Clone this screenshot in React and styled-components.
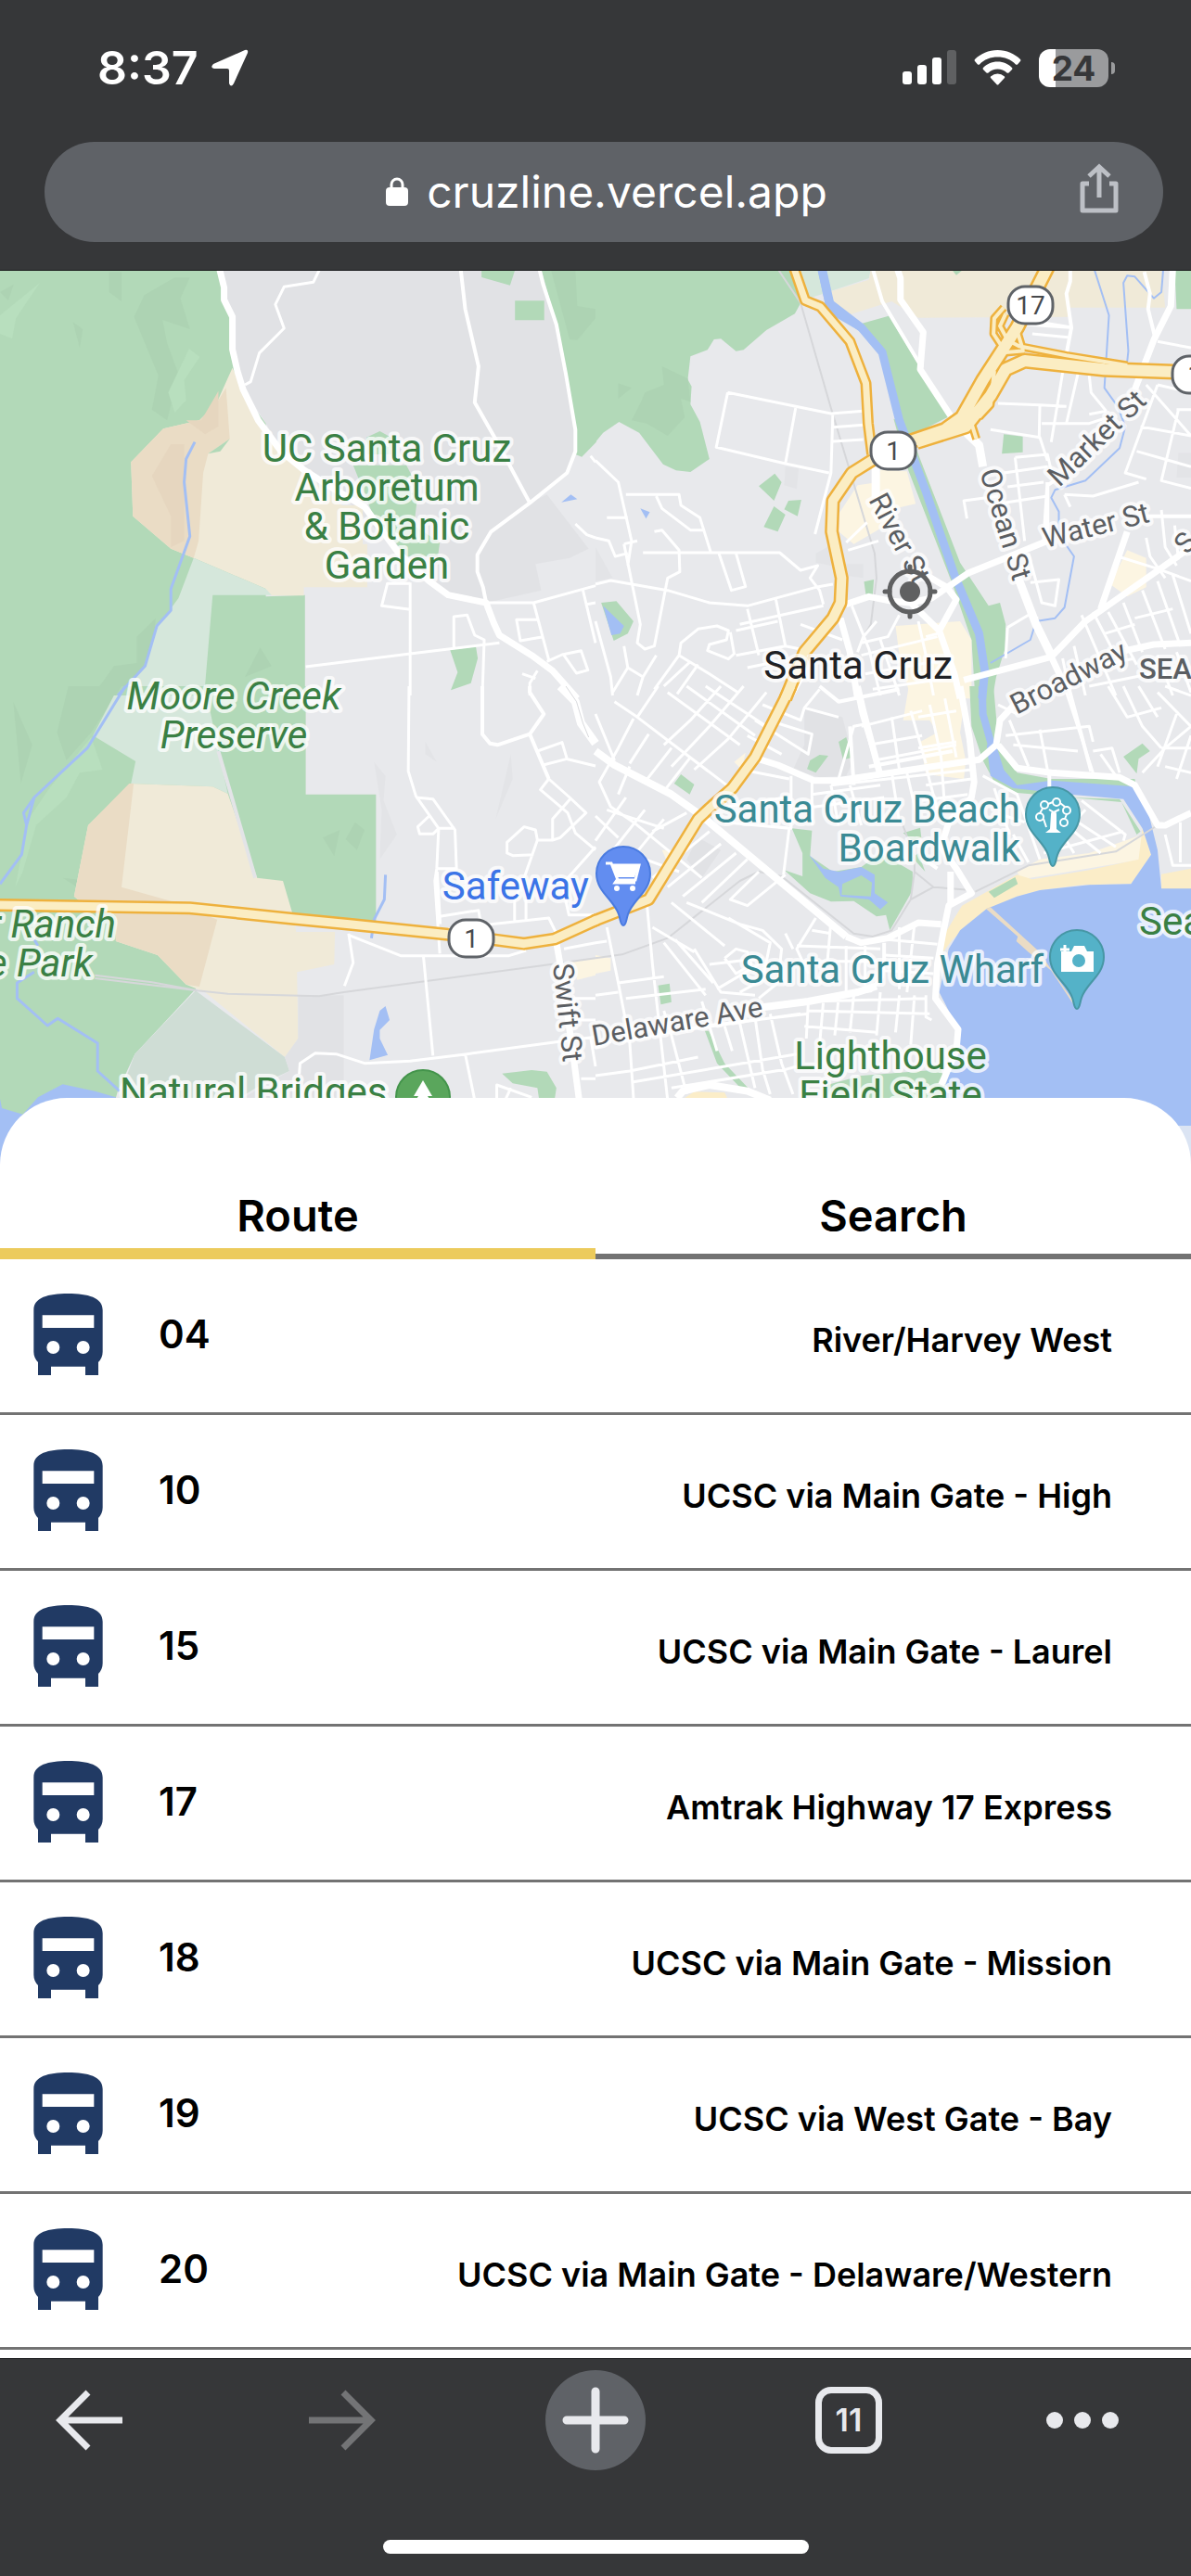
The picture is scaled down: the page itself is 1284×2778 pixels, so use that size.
import React, { useState } from "react"
import styled, { createGlobalStyle } from "styled-components"

const GlobalStyle = createGlobalStyle`
  * {
    box-sizing: border-box;
  }

  body {
    margin: 0;
    background: #363739;
    font-family: Inter, "Liberation Sans", sans-serif;
  }

  button {
    margin: 0;
    padding: 0;
    border: none;
    background: none;
    color: inherit;
    font: inherit;
    cursor: pointer;
  }

  svg {
    display: block;
  }
`

const Page = styled.div`
  display: flex;
  flex-direction: column;
  min-height: 100vh;
`

const Header = styled.header`
  padding: 48px 30px 30px 48px;
  background: #363739;
  border-bottom: 1px solid #17181a;
  color: #fff;
`

const StatusBar = styled.div`
  display: flex;
  justify-content: space-between;
  align-items: center;
  height: 50px;
  padding: 0 52px 0 57px;
`

const StatusGroup = styled.div`
  display: flex;
  align-items: center;
  gap: ${({ $gap }) => $gap}px;
`

const Clock = styled.span`
  font-size: 50px;
  line-height: 50px;
  font-weight: 600;
`

const Battery = styled.div`
  display: flex;
  align-items: center;
  gap: 3px;
`

const BatteryBody = styled.div`
  width: 75px;
  height: 41px;
  border-radius: 12px;
  background: linear-gradient(to right, #fff 18px, #9a9b9d 18px);
  color: #363739;
  font-size: 37px;
  line-height: 41px;
  font-weight: 700;
  text-align: center;
`

const BatteryTip = styled.div`
  width: 4px;
  height: 13px;
  border-radius: 0 6px 6px 0;
  background: #9a9b9d;
`

const AddressBar = styled.div`
  display: grid;
  grid-template-columns: 96px 1fr 90px;
  align-items: center;
  height: 108px;
  margin-top: 55px;
  border-radius: 54px;
  background: #5f6267;
`

const Address = styled.button`
  display: flex;
  justify-content: center;
  align-items: center;
  gap: 20px;
  font-size: 48px;
  line-height: 60px;
`

const ShareButton = styled.button`
  justify-self: start;
  padding-bottom: 8px;
`

const MapView = styled.main`
  svg {
    width: 100%;
    height: auto;
  }
`

const Sheet = styled.section`
  position: relative;
  flex: 1;
  margin-top: -76px;
  padding-top: 80px;
  border-radius: 72px 72px 0 0;
  background: #fff;
  color: #000;
`

const TabList = styled.div`
  display: grid;
  grid-template-columns: 1fr 1fr;
`

const Tab = styled.button`
  height: 94px;
  font-size: 47px;
  line-height: 56px;
  font-weight: 600;
  box-shadow: inset 0 ${({ $active }) => ($active ? "-12px #eccb5c" : "-6px #737373")};
`

const RouteList = styled.ul`
  margin: 0;
  padding: 0;
  list-style: none;
`

const RouteRow = styled.button`
  display: flex;
  align-items: center;
  width: 100%;
  height: 168px;
  padding: 0 85px 4px 36px;
  border-bottom: 3px solid #737373;
  font-weight: 600;
`

const RouteNumber = styled.span`
  margin-left: 60px;
  font-size: 42px;
  line-height: 50px;
`

const RouteName = styled.span`
  margin: 12px 0 0 auto;
  font-size: 36px;
  line-height: 44px;
`

const SearchField = styled.label`
  display: flex;
  align-items: center;
  gap: 36px;
  padding: 48px;
  font-size: 42px;
  font-weight: 600;

  input {
    flex: 1;
    padding: 20px;
    border: 3px solid #737373;
    border-radius: 12px;
    font: inherit;
  }
`

const Footer = styled.footer`
  height: 235px;
  padding-top: 12px;
  border-top: 1px solid #17181a;
  background: #363739;
`

const Toolbar = styled.nav`
  display: grid;
  grid-template-columns: repeat(4, 273fr) 156fr;
  align-items: center;
  padding-left: 36px;
`

const ToolButton = styled.button`
  display: flex;
  justify-content: ${({ $start }) => ($start ? "flex-start" : "center")};
  align-items: center;
  width: 120px;
  height: 108px;
  color: #e8e9ed;

  &:disabled {
    color: #737476;
  }
`

const NewTab = styled.span`
  display: flex;
  justify-content: center;
  align-items: center;
  width: 108px;
  height: 108px;
  border-radius: 50%;
  background: #5f6267;
`

const TabCount = styled.span`
  width: 72px;
  height: 72px;
  border: 7px solid #e8e9ed;
  border-radius: 17px;
  font-size: 34px;
  line-height: 58px;
  font-weight: 600;
`

const HomeIndicator = styled.div`
  width: 459px;
  height: 15px;
  margin: 75px auto 0;
  border-radius: 8px;
  background: #fff;
`

const routes = [
  { number: "04", name: "River/Harvey West" },
  { number: "10", name: "UCSC via Main Gate - High" },
  { number: "15", name: "UCSC via Main Gate - Laurel" },
  { number: "17", name: "Amtrak Highway 17 Express" },
  { number: "18", name: "UCSC via Main Gate - Mission" },
  { number: "19", name: "UCSC via West Gate - Bay" },
  { number: "20", name: "UCSC via Main Gate - Delaware/Western" },
]

// the map is split in four tiles, each 1568 x 1380 units drawn into 642 x 460
const tiles = {
  nw: "translate(0 0) scale(.40944 .33333)",
  ne: "translate(642 0) scale(.40944 .33333)",
  sw: "translate(0 450) scale(.40944 .33333)",
  se: "translate(642 450) scale(.40944 .33333)",
}

const green = "#b2d9b8"
const shade = "#add3b3"
const pale = "#d5e7db"
const beige = "#f0ead8"
const tan = "#eadcc5"
const campus = "#e1e2e5"
const shop = "#fcf5e2"
const sand = "#fbedc8"
const water = "#a3bff4"
const rail = "#d6d7da"

const areas = [
  ["nw", campus, "M575 0H1425L1465 180 1515 520V600L1490 660 1400 755 1440 730 1550 905 1500 935 1410 955 1425 1040 1280 1080 1180 1055 1050 920 900 730 770 640 640 380 612 250V150Z"],
  ["nw", green, "M0 0H578L590 100 612 155V260L625 330 640 400 700 500V1060L803 1055V1390H0Z"],
  ["nw", shade, "M380 85L460 28H500L475 95 500 195 428 165 440 240 470 340 440 490 400 455 417 345 353 155ZM287 10H320V105L287 75ZM192 172L218 195 210 255ZM0 75L36 50 22 102ZM360 1190L410 1130 400 1250 330 1380H245L300 1285 360 1275Z"],
  ["nw", "#b8dfbe", "M105 45L42 160 32 225 0 210V150ZM498 258L526 285 485 360 490 425 460 465 443 400Z"],
  ["nw", beige, "M612 320L590 380 570 435 525 490 430 517 345 625 350 800 450 905 510 935 700 1035 715 1057H800V1030H967V890H955V765H900L790 650 700 520 640 390Z"],
  ["nw", tan, "M595 385L570 435 525 490 430 517 345 625 350 800 450 905 510 935 523 880 535 660 548 598 605 550Z"],
  ["nw", "#e6d6bf", "M575 395V510L540 535 490 490 530 490ZM450 567H485V880L450 900V800L400 670Z"],
  ["nw", green, "M548 598L605 550 580 590Z"],
  ["nw", pale, "M510 935L700 1035 715 1055H560L537 1390H300L382 1285 413 1160 470 1065Z"],
  ["nw", shade, "M685 1225L715 1285 645 1320Z"],
  ["nw", green, "M1268 0H1357L1343 53 1268 27ZM1356 103H1433V166H1356ZM1425 0L1465 180 1515 520V600L1532 608 1570 560V0ZM965 545L1000 525 1030 545V600H965ZM930 635H1070L1085 670 1097 760 1090 830 1158 885 1153 930H1070L980 790ZM1185 1232L1253 1222 1258 1260 1240 1340 1187 1363 1205 1305Z"],
  ["nw", shade, "M1450 0H1515L1520 120 1568 130V160L1520 230 1500 228Z"],
  ["nw", water, "M1478 755L1503 730 1520 745Z"],

  ["ne", green, "M0 0H510L545 100 525 145 450 198 390 262 370 266 330 226 312 228 295 262 250 283 243 358 253 380 250 438 275 495 300 615 250 657 212 652 178 632 115 530 62 495 20 530 0 560Z"],
  ["ne", shade, "M175 315L243 355 250 430 225 420 235 480 190 540 135 500 95 490 120 430 130 400 180 375ZM60 370L95 385 60 420Z"],
  ["ne", pale, "M535 0H725L720 30 600 80 550 100Z"],
  ["ne", beige, "M600 80L720 35 725 0H1490L1500 125H1250V155L850 158 780 105 650 155Z"],
  ["ne", green, "M1525 0H1568V130L1530 130ZM940 5H965L950 20Z"],
  ["ne", green, "M700 177L772 152 860 330 935 475 830 540 795 490 760 290 740 240ZM785 485L820 500 850 600 960 950 1035 1090 1065 1080 1080 1150 1078 1230 1055 1320 1045 1390H1000L990 1200 940 1020 820 640ZM15 1080L55 1075 100 1140 85 1180 48 1203ZM472 662L490 690 470 750 430 703ZM508 750L542 747 532 800 497 778ZM470 768L500 795 480 850 443 835ZM1075 535L1125 542V593L1070 598ZM707 1012L733 1005 730 1055H712Z"],
  ["ne", "#e3e4e7", "M0 900L45 1000 0 1010ZM500 640L535 645 530 712 497 700ZM1535 595H1568V675H1530ZM580 920L625 890 620 960 580 950ZM645 955H705V1000L645 990Z"],
  ["ne", shop, "M750 650L820 655 843 760 790 775 790 820 750 840 680 890 640 850 642 790 690 700 745 690ZM1400 910L1450 935 1450 1030 1400 1060 1355 1020ZM790 1155L960 1140 990 1200V1390H830L800 1250Z"],
  ["ne", water, "M20 1090L75 1155 65 1180 42 1185ZM118 775L143 787 133 808ZM584 0H608L632 130 680 160 755 250 770 320 715 215 610 140Z"],

  ["sw", green, "M0 0H805V350H990V765L770 735 700 735 500 1000 355 1190 310 1310 305 1332 60 1400H0Z"],
  ["sw", shade, "M180 0H320L240 150 200 205 175 240 150 150ZM35 50L85 190 55 315ZM935 440L960 465 940 530 910 495ZM850 490L895 465 880 550ZM165 620L235 630 210 655Z"],
  ["sw", "#b8dfbe", "M240 165L270 270 210 280 175 360 95 450 60 600 40 650 75 430 130 330Z"],
  ["sw", pale, "M300 30H545L575 210 600 348 560 325 345 315 357 243 245 160Z"],
  ["sw", beige, "M345 315L560 325 600 348 677 620 745 630 770 735 780 795H882L880 900 782 925 785 1140 750 1200 540 990 490 965 415 870 305 825V740L210 695 195 680 232 450Z"],
  ["sw", tan, "M340 315L232 450 195 680 210 695 305 740V825L415 870 490 965 525 972 572 755 500 720 450 695 320 650 352 315Z"],
  ["sw", "#cfddd5", "M515 985L750 1200 762 1245 700 1280 620 1340H310L355 1190Z"],
  ["sw", campus, "M785 1000H905V1332H640L762 1245 750 1200 785 1140Z"],
  ["sw", green, "M1322 1253L1400 1242 1440 1247 1465 1300 1460 1340H1420L1415 1300 1350 1285Z"],
  ["sw", shop, "M1505 890L1568 880V935L1520 950Z"],
  ["sw", "#e3e4e7", "M985 245L1015 290 1010 370 1045 480 1000 560 1005 400ZM1120 180L1150 245 1120 220ZM1345 220L1350 300 1305 430Z"],
  ["sw", water, "M0 1335L5 1365 60 1385 100 1330 165 1288 250 1310 305 1330V1600H0ZM1015 1035L1026 1080 1000 1112V1140L1021 1193 973 1210 985 1110 1000 1050Z"],

  ["se", campus, "M550 70L650 100 680 240 660 290 590 295 520 270 550 190ZM270 490L330 530 280 620 240 560Z"],
  ["se", shop, "M825 0H965L970 60 960 150 975 240 970 300 870 285 855 180 900 150 880 110 810 110ZM365 245L395 215 385 270ZM175 530H215L200 600ZM0 870L40 880V920L0 930ZM1110 600L1170 560 1300 540 1440 480 1440 560 1200 610 1120 625Z"],
  ["se", sand, "M1440 460L1463 545 1410 640 1280 643 1170 660 1110 680 1010 740 940 820 915 860 920 800 965 710 1030 665 1110 610 1150 625 1300 595 1430 560ZM1490 608L1568 590V657H1490ZM235 1332L260 1312 340 1315 350 1340Z"],
  ["se", green, "M985 0H1048L1060 170 1110 280 1200 300 1420 300 1425 330 1200 330 1250 360 1380 365 1435 470 1425 480 1385 375 1250 360 1110 345 1050 310 1020 240 990 130ZM517 460L570 467 565 550 625 600 700 585 750 540 835 600 835 660 775 790 765 740 740 745 680 695 620 697 565 670 497 595 545 615 545 540ZM810 475L855 458 858 490 835 500ZM835 555L850 540 868 600ZM640 180L660 165 678 230 652 238ZM565 240L590 222 613 225 580 280 557 268ZM225 285L260 318 248 350 207 315ZM165 968L195 962 200 1022 172 1030ZM1390 228L1440 185 1460 210 1430 235 1425 283ZM610 1290L700 1260 910 1240 930 1340H610ZM288 1115H298L340 1220 410 1310H390L320 1220Z"],
  ["se", water, "M562 545L600 590 640 600 700 585 735 610V670L770 700 750 722 720 690 645 680 640 650 605 620ZM1570 655H1490L1480 530 1450 380 1420 325 1200 305 1110 320 1075 270 1055 190 1030 190 1040 290 1100 330 1250 350 1390 365 1440 460 1463 545 1410 640 1300 643 1170 660 1110 680 1030 720 960 790 930 850 905 990 930 1050 960 1110 950 1180 930 1260 910 1332V1600H1570Z"],
  ["se", green, "M650 640L700 612 728 635 725 680 648 675ZM1035 665L1105 618 1112 640 1050 685Z"],
  ["se", tan, "M1028 720L1040 715 1120 805 1165 855 1268 1035V1048L1200 920 1140 860 1108 825 1112 810Z"],
]

// tile, width, colour, path
const lines = [
  ["nw", 3, water, "M513 560L490 615 485 690 500 865 450 1035V1105L413 1155 382 1285 310 1380"],
  ["ne", 9, water, "M596 0L615 110 700 190 755 270 800 490 870 720 945 990 1010 1180 1025 1300 1018 1390"],
  ["ne", 2, water, "M1313 0L1352 150 1340 385 1375 445 1395 510 1380 580 1290 685 1210 715 1200 740 1220 785V860L1260 930 1235 1095 1210 1130 1160 1140 1145 1200 1040 1275M1495 0L1490 75 1470 95 1420 25 1400 22 1390 45 1403 265 1400 300"],
  ["sw", 3, water, "M330 0L230 200 90 360 62 410 70 450 57 545 0 640M90 360L70 450M90 820L100 840M90 925L45 960V1010L125 1098 152 1075 257 1155V1245L315 1310M1015 610L1012 690 985 755 978 815"],
  ["se", 8, water, "M1018 0L1020 90 1045 200"],
  ["sw", 4, "#e3e4e7", "M575 210L672 620"],
  ["sw", 2, rail, "M250 935L400 958 520 985 600 995 840 1003 905 990 1450 900 1568 880M250 945L520 985"],
  ["se", 2, rail, "M0 880L70 868 190 815 380 630 430 600 490 615 680 800 730 810 780 790 830 690 840 600 860 620 890 650 990 660M890 650L830 690M1000 665L1140 580 1370 535 1480 450 1568 410M840 600V550L800 420"],
  ["ne", 2, rail, "M480 0L540 110 620 450 735 920 740 1000 725 1150 705 1190"],

  ["nw", 3, "#fff", "M842 0L825 43 748 58 725 115 748 192 683 272 660 365 645 375M1280 1080H1405L1568 1025M1080 1015V1380M1080 1018H1020L1005 1090 1080 1102M805 1287L1080 1245 1315 1210M1195 1225V1125L1230 1120 1250 1185 1275 1200 1270 1380M1405 1080L1445 1265M1415 1300L1395 1340V1380M1375 1310L1410 1325M1420 1135H1360L1370 1203 1430 1190M1440 1270L1480 1248 1530 1235 1548 1298 1518 1308 1485 1250M1535 1040L1568 1210M1545 1085L1568 1080M1568 625L1555 605M1515 825L1545 860 1568 870"],
  ["nw", 4, "#fff", "M1213 0L1225 130 1260 315 1250 432 1300 540 1395 757M1420 0L1430 50 1465 180 1490 340 1515 520V590L1493 660 1395 757 1293 850 1257 925V980L1272 1030 1280 1080"],
  ["nw", 7, "#fff", "M578 0L590 60V100L612 155V260L625 330 640 390 680 490 740 590 800 650 870 705 960 770 1050 920 1130 1010 1180 1055 1280 1080 1300 1145 1315 1185 1400 1250 1455 1300 1520 1390"],

  ["ne", 3, "#fff", "M0 620L60 690 95 880 85 960M348 400L620 468 705 460M348 400L318 577 500 630 615 660M527 450L500 630M625 468L620 660 578 858M625 512L705 505M625 558L705 552M80 730H220L225 765 275 805 303 915M160 735L175 775 250 845H285M30 805H85M0 870L35 880 52 930 85 920M75 890L110 880M155 850L175 845 220 910 222 980 190 1000 155 1220 130 1230 110 1210 118 1150 75 890M125 918H485L540 975 585 960 565 1000 590 1040 600 1085M325 920L358 1040 395 1028 370 920M0 1020L40 1008 190 1040 300 1080 400 1090 580 1030 625 1020M665 910L745 880M660 885L715 820M0 1140L40 1320 45 1380M75 1220L85 1290 125 1320 160 1250M85 1290L45 1370M125 1320L110 1380M220 1250L225 1210 270 1165 320 1155 350 1170 345 1200 300 1215 295 1235 350 1262 365 1245 355 1175M220 1250L300 1310 375 1370M220 1250L155 1360M270 1280L215 1375M250 1270L180 1350M370 1170L480 1140M370 1250L500 1220 540 1230M400 1290L480 1270M400 1100L430 1250M475 1070L500 1220M380 1150L600 1090M540 1150L650 1200M520 1380L570 1270"],
  ["ne", 3, "#fff", "M1060 435L1170 440 1240 445M1040 520L1170 545 1190 620M1170 440L1168 550M1175 500L1300 500 1350 480M1230 335L1200 560M1270 340L1240 500M1300 345L1305 400 1345 460M1345 460L1300 470M1130 180L1250 190M1150 210L1250 222M1160 170L1250 188M1075 660L1190 640M1105 610L1190 600 1205 680M1105 610L1130 880M1085 705L1180 690M1060 760L1190 735M1060 735L970 750 978 808M1480 375L1395 660 1450 680M1480 375L1568 400M1450 375L1568 540M1435 510L1568 540M1425 590L1568 640M1535 455L1490 685 1568 710M1235 730L1310 735 1430 690M1235 730L1250 770M1450 870L1460 930 1500 1000M1490 780L1500 900 1530 960M1525 830L1535 940M1375 930L1480 970 1568 1010M1480 235L1568 255M1530 455H1568M1140 920L1175 1080 1210 1090 1220 1005 1145 1015M1085 1160L1140 1120 1165 1130M1085 1160L1080 1260M1280 1120L1370 1380M1310 1110L1390 1300M1350 1110L1425 1280M1390 1080L1440 1240M1440 1040L1500 1230M1480 1010L1540 1220M1520 990L1568 1180M1230 1260L1250 1380M1260 1220L1290 1380M1300 1290L1420 1260M1340 1180L1420 1150M1420 1130L1520 1100M1300 1350L1460 1310M1480 1250L1520 1380M1530 1240L1568 1370"],
  ["ne", 3, "#fff", "M675 1090L720 1230 750 1380M740 1140L705 1190 690 1240M800 1120L770 1190 700 1210M750 1200L800 1380M850 1140L870 1250 890 1380M870 1190L900 1180M700 1250L900 1190M710 1310L940 1260M730 1360L950 1320"],
  ["ne", 4, "#fff", "M730 0L755 105 860 320M1250 0V40L1240 80 1253 190 1240 275M1445 10L1460 80 1455 130 1475 230M1190 690L1190 870M1180 890L1190 700 1215 680M1450 800H1568"],
  ["ne", 7, "#fff", "M795 0L803 30V100L863 205 855 325 935 475M1520 0L1515 120 1470 230 1420 390M660 1085L720 1060 780 1075 830 1080 885 1065 980 985 1080 935 1190 880M830 1080L905 1170 945 1310 960 1390M905 1170L950 1070 925 1030 870 990M1400 850L1330 1100M970 1330L1200 1255 1290 1140 1568 900M1200 1255L1225 1320M1395 1235L1470 1215 1568 1210M645 1130L670 1240 690 1390"],
  ["ne", 9, "#fff", "M738 640V740M960 510L1010 570 1020 640M1110 990L1160 1150 1200 1250"],

  ["sw", 3, "#fff", "M1077 0L1075 275 1095 355 1155 460 1150 590 1145 630 1158 865M1095 360L1140 365 1198 465 1202 590H1150M1155 460H1198M1130 420L1100 455 1105 478H1140L1155 460M1445 300L1500 360 1543 410 1475 490 1455 498H1415M1415 210L1480 182 1493 235 1430 255M1490 235L1568 258M1445 300L1423 335 1495 410 1515 475 1568 530M1505 360L1455 430V498M1415 498L1410 465 1380 455 1335 505V540L1350 548 1405 545M1415 498L1380 620 1355 690V760M1568 520L1510 600 1480 640 1498 740 1568 740M1385 690V760M1158 745L1260 725 1265 760M1180 785L1445 750 1465 800M918 800L930 895 907 970M918 805L1055 872H1340L1385 855M1115 875L1140 1195M788 1255L790 1220 830 1187 885 1190 960 1220 1080 1213 1230 1190 1500 1145 1568 1135M1225 1190L1250 1340M1308 1340V1290L1400 1330M1345 1300L1330 1340M1485 850L1568 830M1510 1010H1568M1520 1080H1568M1530 1270H1568M1555 1135L1568 1230"],
  ["sw", 4, "#fff", "M1270 0V155L1290 185 1310 190 1395 155 1432 90 1395 20V0M1395 155L1445 300M1158 770L1150 600"],
  ["sw", 9, "#fff", "M1475 0L1515 50 1530 120 1568 185"],
  ["sw", 1, "#d9dadd", "M1490 0L1518 50 1535 120 1550 165"],
  ["sw", 7, "#fff", "M1465 830L1475 900 1510 1200 1525 1340"],

  ["se", 3, "#fff", "M0 90L50 240M100 105L60 200 10 310 40 390 100 440M165 0L110 100 345 320M190 20L380 190M240 0L420 160M290 0L450 130M140 155L90 250M200 200L130 310M250 230L180 340M90 260L60 350M50 50L110 100M330 0L250 110 180 190M390 0L300 130 200 260M450 20L350 170 260 270M420 110L560 220 570 155 480 120M400 160L490 220M440 60L540 110 550 70 640 100M550 70L590 10M385 270L510 300M345 390L500 360M0 500L80 360M40 540L130 400M100 550L180 430M100 440L280 620M150 470L240 410M130 560L220 600M150 620L300 470M190 650L330 510M230 680L370 540M280 700L400 560M30 400L180 460M0 420L60 490M430 600L355 690 400 710 500 610M515 290V460L480 455M570 300V450M620 320L640 450M670 320L700 450M570 350L750 320M520 400L760 360M340 440L510 460 495 610M200 700L340 840M150 780L260 860M240 700L380 770 440 790 490 850 480 960 430 1010M180 830L290 1000M210 820L310 960M260 850L330 990 420 1000M350 750L460 830 440 950 380 990M340 880L370 850 400 860 410 900 370 930 340 880M300 900L440 880M320 980L430 900"],
  ["se", 3, "#fff", "M135 700L150 900 190 1340M30 780L60 960 90 1150 100 1332M0 1260L90 1245 270 1200M70 1150L280 1100 560 1060M0 1000L60 990M60 960L180 940M0 830L30 825M80 1010L290 980M100 1280L340 1230 530 1190M200 1300L500 1240 530 1230M280 1020L320 1180M340 1100L360 1180M380 1090L420 1300M420 1070L440 1240 460 1320M460 1060L490 1220 520 1320M180 1050L200 1130 240 1320M40 1150L0 1170M190 1120L540 1060M560 1030L555 1140M600 1020L590 1160M640 1010L630 1130M680 1000L670 1120M750 990L740 1130M800 1000L790 1120M840 1000L830 1160M870 1000V1070L885 1080M560 1050L880 1060M550 1100L740 1120M560 1020L870 1010M660 840V990M710 840V970M800 780V980M840 770L820 990M760 870L890 880M760 920L890 930M770 820L900 835M500 800L520 850M580 750L530 850 560 930M620 760L610 900M570 790L620 800M530 840L750 850M550 890L740 890M640 300L680 130 720 120M700 130L860 80M720 190L860 160M735 240L950 190M620 320L990 270M780 280L800 440M820 280L850 440M870 260L900 400M910 230L920 400M780 100L800 270M830 80L870 250M880 60L910 230M920 40L950 230M850 100L950 80M850 200L950 180M870 320L990 300M860 370L980 350M990 380L930 450M1020 290L1110 350 1170 560M1050 330L1090 480M1080 420L1130 440M1280 370L1395 480 1390 500M1220 400L1370 520M1240 450L1330 540M1290 400L1230 480 1260 540M1180 540L1390 470M1100 480L1140 570"],
  ["se", 3, "#fff", "M1090 110L1140 260M1170 140L1190 270M1240 20L1310 280M1080 160L1300 130 1310 180M1100 190L1270 210M1310 210L1360 200 1380 280M1350 0L1400 100 1490 70M1390 0L1440 130 1490 200M1430 0L1480 100M1480 20L1568 130 1500 200 1440 280M1530 90L1480 260M1568 160L1530 300M1490 200H1568M1500 260L1568 280M1500 480L1520 580H1568M1540 440V570M1060 60L1110 90M1330 220L1370 290M1500 0L1568 30"],
  ["se", 4, "#fff", "M590 0L640 50 800 10M685 0L700 90 750 290M720 260L940 210M670 130L680 320M760 830V880L755 940 725 985 690 990M1195 285V330M1245 0L1305 275M865 560L900 590"],
  ["se", 7, "#fff", "M690 0L705 80 750 290M420 232L480 255 575 305H640L860 265 1010 238 1055 190 1065 110 1110 50M960 0L985 170 997 310 990 360 930 440 910 520 950 590 990 670 930 710 915 800 900 900 895 1010 955 1110 950 1180 910 1290M1060 190L1110 265 1200 280 1380 295 1420 320 1480 450 1500 450 1568 410M935 600V710M910 770L850 765 770 815 700 830 660 810"],
  ["se", 8, "#fff", "M0 210L50 255 200 350 280 420 660 810M430 1040L560 1020 690 990 740 970M215 1332L230 1310 300 1290 400 1310 460 1340"],
]

// drawn twice, as casing and as fill
const highways = [
  ["ne", 12, "M522 -5L552 102 592 122 670 235 712 370 718 500 728 600"],
  ["ne", 9, "M1075 125L1050 160 1048 210 1080 270M1080 145L1065 185 1085 230 1115 250 1240 280 1400 312M1110 200L1125 260M1080 270L1130 265M1010 470L990 500 1003 550M1050 330L1040 440 1010 480"],
  ["ne", 17, "M825 560L920 520 965 480 1020 360 1110 190 1190 -5M845 560L975 510 1040 410 1080 325 1130 297 1340 325 1568 335"],
  ["ne", 15, "M740 610L675 660 625 750 622 850 648 1000 645 1080 625 1130 550 1240 500 1390"],
  ["sw", 14, "M-5 708L500 718 770 752 920 770 1180 803 1300 820 1380 833 1460 818 1573 755"],
  ["se", 14, "M-5 760L140 690 175 620 270 430 300 395 360 330 420 230 515 0"],
]

const shields = [
  { x: 1111, y: 39, text: "17" },
  { x: 963, y: 196, text: "1" },
  { x: 1288, y: 114, text: "1" },
  { x: 508, y: 722, text: "1" },
]

const streets = [
  { x: 936, y: 249, angle: 62, text: "River St" },
  { x: 1056, y: 219, angle: 73, text: "Ocean St" },
  { x: 1142, y: 236, angle: -44, text: "Market St" },
  { x: 1127, y: 301, angle: -14, text: "Water St" },
  { x: 1096, y: 481, angle: -27, text: "Broadway" },
  { x: 596, y: 750, angle: 84, text: "Swift St" },
  { x: 640, y: 838, angle: -10, text: "Delaware Ave" },
  { x: 1280, y: 309, angle: -50, text: "S" },
]

const parkColor = "#3a8044"
const placeColor = "#3a8a94"

const places = [
  { x: 417, y: 208, fill: parkColor, lines: ["UC Santa Cruz", "Arboretum", "& Botanic", "Garden"] },
  { x: 252, y: 475, fill: parkColor, italic: true, lines: ["Moore Creek", "Preserve"] },
  { x: 125, y: 721, fill: parkColor, italic: true, anchor: "end", lines: ["r Ranch"] },
  { x: 100, y: 763, fill: parkColor, italic: true, anchor: "end", lines: ["e Park"] },
  { x: 129, y: 902, fill: parkColor, anchor: "start", lines: ["Natural Bridges"] },
  { x: 960, y: 863, fill: parkColor, lines: ["Lighthouse", "Field State"] },
  { x: 1228, y: 718, fill: parkColor, anchor: "start", lines: ["Sea"] },
  { x: 635, y: 680, fill: "#3b74e7", anchor: "end", lines: ["Safeway"] },
  { x: 1100, y: 597, fill: placeColor, anchor: "end", lines: ["Santa Cruz Beach", "Boardwalk"] },
  { x: 1125, y: 770, fill: placeColor, anchor: "end", lines: ["Santa Cruz Wharf"] },
  { x: 925, y: 442, fill: "#202124", lines: ["Santa Cruz"] },
]

const MapText = styled.text`
  font-family: Roboto, sans-serif;
  font-size: ${({ $size }) => $size || 42}px;
  font-style: ${({ $italic }) => ($italic ? "italic" : "normal")};
  font-weight: ${({ $bold }) => ($bold ? 500 : 400)};
  stroke: ${({ $plain }) => ($plain ? "none" : "rgba(255, 255, 255, 0.75)")};
  stroke-width: 8px;
  stroke-linejoin: round;
  paint-order: stroke;
`

const Pin = ({ x, y, fill, edge, children }) => (
  <g transform={`translate(${x} ${y})`}>
    <path
      d="M0 56C-3 56-3 50-5 44C-10 28-29 20-29 0A29 29 0 1 1 29 0C29 20 10 28 5 44C3 50 3 56 0 56Z"
      fill={fill}
      stroke={edge}
      strokeWidth="2"
    />
    {children}
  </g>
)

const CityMap = () => (
  <svg viewBox="0 2 1284 968" role="img" aria-label="Map of Santa Cruz">
    <rect width="1284" height="970" fill="#e8e9ec" />
    {areas.map(([tile, fill, d], i) => (
      <path key={i} transform={tiles[tile]} fill={fill} d={d} />
    ))}
    <rect x="1200" y="924" width="84" height="46" fill="#dbe4f3" />
    <g fill="none" strokeLinejoin="round">
      {lines.map(([tile, width, color, d], i) => (
        <path
          key={i}
          transform={tiles[tile]}
          stroke={color}
          strokeWidth={width}
          vectorEffect="non-scaling-stroke"
          d={d}
        />
      ))}
      {highways.map(([tile, width, d], i) => (
        <path
          key={i}
          transform={tiles[tile]}
          stroke="#eeb13d"
          strokeWidth={width}
          vectorEffect="non-scaling-stroke"
          d={d}
        />
      ))}
      {highways.map(([tile, width, d], i) => (
        <path
          key={i}
          transform={tiles[tile]}
          stroke="#fbedc3"
          strokeWidth={width - 5}
          vectorEffect="non-scaling-stroke"
          d={d}
        />
      ))}
    </g>

    {shields.map(({ x, y, text }) => (
      <g key={`${x}-${y}`}>
        <rect x={x - 24} y={y - 20} width="48" height="40" rx="18" fill="#fff" stroke="#5f6368" strokeWidth="3" />
        <MapText x={x} y={y + 10} $size={28} $plain fill="#47494c" textAnchor="middle">
          {text}
        </MapText>
      </g>
    ))}

    {streets.map(({ x, y, angle, text }) => (
      <MapText key={text} transform={`translate(${x} ${y}) rotate(${angle})`} $size={31} fill="#5b5e62">
        {text}
      </MapText>
    ))}
    <MapText x="1228" y="442" $size={31} $bold fill="#5b5e62">
      SEA
    </MapText>

    {places.map((place) =>
      place.lines.map((line, i) => (
        <MapText
          key={line}
          x={place.x}
          y={place.y + i * 42}
          fill={place.fill}
          textAnchor={place.anchor || "middle"}
          $italic={place.italic}
        >
          {line}
        </MapText>
      ))
    )}

    <Pin x={672} y={652} fill="#628df0" edge="#4a7be0">
      <path d="M-19-11H-13L-6 7H13L17-9H-12M-7 7L-9 10H13" fill="none" stroke="#fff" strokeWidth="3" />
      <path d="M-12-9H17L12 4H-7Z" fill="#fff" />
      <circle cx="-7" cy="16" r="3" fill="#fff" />
      <circle cx="10" cy="16" r="3" fill="#fff" />
    </Pin>
    <Pin x={1135} y={588} fill="#54b2c8" edge="#4797a5">
      <path d="M-8 20L-3 16-2 0A3 3 0 0 1 4 0L4 16 9 20Z" fill="#fff" />
      <g fill="none" stroke="#fff" strokeWidth="2">
        <circle cx="4" cy="-13" r="4" />
        <circle cx="-9" cy="-10" r="4" />
        <circle cx="-14" cy="3" r="4" />
        <circle cx="15" cy="-4" r="4" />
        <circle cx="12" cy="9" r="4" />
        <path d="M-5-11L0-13M8-12L13-8M-11-6L-14-1M15 0L13 5M-10 5L-7 14M-4-5L1-2 7-5" />
      </g>
    </Pin>
    <Pin x={1161} y={742} fill="#54b2c8" edge="#4797a5">
      <path d="M-17-6H-6L-3-12H8L11-6H18V16H-17Z" fill="#fff" />
      <path d="M-13-13V-3M-18-8H-8" stroke="#fff" strokeWidth="3" />
      <circle cx="2" cy="4" r="7" fill="#54b2c8" />
    </Pin>
    <circle cx="456" cy="893" r="29" fill="#5aa65c" stroke="#43944b" strokeWidth="2" />
    <path d="M456 875L466 892H461L468 903H444L451 892H446Z" fill="#fff" />

    <g stroke="#5f6061" strokeWidth="5" fill="none" strokeLinecap="round">
      <circle cx="981" cy="348" r="22" />
      <path d="M981 326V321M981 370V375M959 348H954M1003 348H1008" />
    </g>
    <circle cx="981" cy="348" r="11" fill="#5f6061" />
  </svg>
)

const BusIcon = () => (
  <svg width="75" height="88" viewBox="109 195 223 264" aria-hidden="true">
    <path
      fill="#213a64"
      fillRule="evenodd"
      d="M109 248C109 208 155 195 220 195S332 208 332 248V383Q332 402 318 417V459H276V431H165V459H123V417Q109 402 109 383ZM137 265V306H304V265ZM172 348A21 21 0 1 0 172 390 21 21 0 1 0 172 348ZM269 348A21 21 0 1 0 269 390 21 21 0 1 0 269 348Z"
    />
  </svg>
)

const App = () => {
  const [tab, setTab] = useState("route")

  return (
    <>
      <GlobalStyle />
      <Page>
        <Header>
          <StatusBar>
            <StatusGroup $gap={13}>
              <Clock>8:37</Clock>
              <svg width="41" height="40" viewBox="0 0 41 40" aria-hidden="true">
                <path d="M37 1Q41 0 40 4L25 37Q22 42 20 37V23Q20 21 18 21H4Q-1 20 3 16Z" fill="#fff" />
              </svg>
            </StatusGroup>
            <StatusGroup $gap={19}>
              <svg width="58" height="38" viewBox="0 0 58 38" fill="#fff" aria-hidden="true">
                <rect y="23" width="10" height="14" rx="3" />
                <rect x="16" y="16" width="10" height="21" rx="3" />
                <rect x="32" y="8" width="10" height="29" rx="3" />
                <rect x="48" width="10" height="37" rx="3" fill="#5f6062" />
              </svg>
              <svg width="51" height="38" viewBox="0 0 51 38" fill="#fff" aria-hidden="true">
                <path d="M25.500 0C35 0 44 4 50 10Q51 11 50 12L47 15.500Q46 16 45 15.500C40 10 33 7.500 25.500 7.500S11 10 6 15.500Q5 16 4 15.500L1 12Q0 11 1 10C7 4 16 0 25.500 0Z" />
                <path d="M25.500 12.500C32 12.500 37 15 41 19Q42 20 41 21L37.500 24.500Q36.500 25 35.500 24.500C33 22 29 20.500 25.500 20.500S18 22 15.500 24.500Q14.500 25 13.500 24.500L10 21Q9 20 10 19C14 15 19 12.500 25.500 12.500Z" />
                <path d="M25.500 25.500Q29.500 25.500 33 28.500 33.500 29.500 33 30L26.500 37Q25.500 38 24.500 37L18 30Q17.500 29.500 18 28.500 21.500 25.500 25.500 25.500Z" />
              </svg>
              <Battery>
                <BatteryBody>24</BatteryBody>
                <BatteryTip />
              </Battery>
            </StatusGroup>
          </StatusBar>
          <AddressBar>
            <span />
            <Address>
              <svg width="24" height="32" viewBox="0 0 24 32" aria-hidden="true">
                <path d="M6 12V8A6 6 0 0 1 18 8V12" fill="none" stroke="#fff" strokeWidth="3" />
                <rect y="11" width="24" height="20" rx="4" fill="#fff" />
              </svg>
              cruzline.vercel.app
            </Address>
            <ShareButton aria-label="Share">
              <svg width="42" height="54" viewBox="0 0 42 54" fill="none" stroke="#bdc0c6" strokeWidth="5" aria-hidden="true">
                <path d="M10 22H3V51H39V22H32" strokeLinejoin="round" />
                <path d="M21 37V5M10 14L21 4 32 14" />
              </svg>
            </ShareButton>
          </AddressBar>
        </Header>

        <MapView>
          <CityMap />
        </MapView>

        <Sheet>
          <TabList role="tablist">
            <Tab role="tab" aria-selected={tab === "route"} $active={tab === "route"} onClick={() => setTab("route")}>
              Route
            </Tab>
            <Tab role="tab" aria-selected={tab === "search"} $active={tab === "search"} onClick={() => setTab("search")}>
              Search
            </Tab>
          </TabList>
          {tab === "route" ? (
            <RouteList>
              {routes.map(({ number, name }) => (
                <li key={number}>
                  <RouteRow>
                    <BusIcon />
                    <RouteNumber>{number}</RouteNumber>
                    <RouteName>{name}</RouteName>
                  </RouteRow>
                </li>
              ))}
            </RouteList>
          ) : (
            <SearchField>
              Search
              <input type="search" />
            </SearchField>
          )}
        </Sheet>

        <Footer>
          <Toolbar>
            <ToolButton aria-label="Back">
              <svg width="72" height="66" viewBox="0 0 72 66" fill="none" stroke="currentColor" strokeWidth="7" aria-hidden="true">
                <path d="M72 33H5M35 3L5 33 35 63" />
              </svg>
            </ToolButton>
            <ToolButton aria-label="Forward" disabled>
              <svg width="72" height="66" viewBox="0 0 72 66" fill="none" stroke="currentColor" strokeWidth="7" aria-hidden="true">
                <path d="M0 33H67M37 3L67 33 37 63" />
              </svg>
            </ToolButton>
            <ToolButton aria-label="New tab">
              <NewTab>
                <svg width="72" height="72" viewBox="0 0 72 72" stroke="currentColor" strokeWidth="9" strokeLinecap="round" aria-hidden="true">
                  <path d="M36 5V67M5 36H67" />
                </svg>
              </NewTab>
            </ToolButton>
            <ToolButton aria-label="Show tabs">
              <TabCount>11</TabCount>
            </ToolButton>
            <ToolButton aria-label="Menu" $start>
              <svg width="78" height="18" viewBox="0 0 78 18" fill="currentColor" aria-hidden="true">
                <circle cx="9" cy="9" r="9" />
                <circle cx="39" cy="9" r="9" />
                <circle cx="69" cy="9" r="9" />
              </svg>
            </ToolButton>
          </Toolbar>
          <HomeIndicator />
        </Footer>
      </Page>
    </>
  )
}

export default App
